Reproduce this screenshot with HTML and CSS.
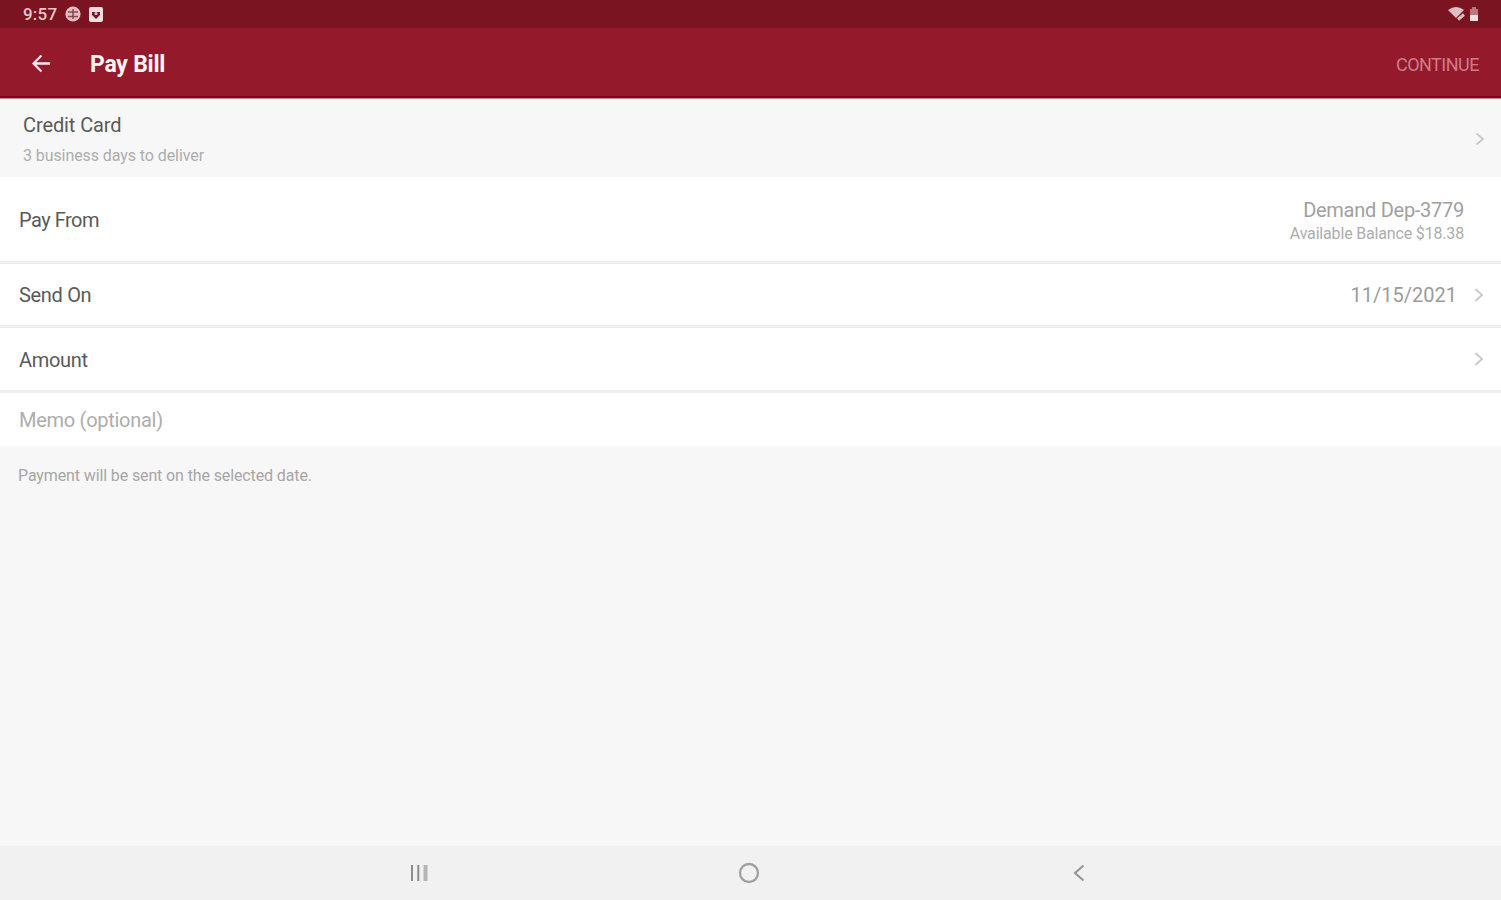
FILE: index.html
```html
<!DOCTYPE html>
<html lang="en">
<head>
<meta charset="utf-8">
<title>Pay Bill</title>
<link rel="stylesheet" href="styles.css">
</head>
<body>
<div class="status">
  <span class="time">9:57</span>
  <svg class="s-globe" width="16" height="16" viewBox="0 0 16 16"><circle cx="8" cy="8" r="7.600" fill="#e3bcc1"/><path d="M3 6h10M3 10.500h10M8 3v10" stroke="#8d4350" stroke-width="1.500"/></svg>
  <svg class="s-app" width="14" height="15" viewBox="0 0 14 15"><rect width="14" height="15" rx="2" fill="#f3dcde"/><path d="M3 5h8v3l-4 4-4-4z" fill="#701824"/><circle cx="7" cy="6.500" r="1.600" fill="#e4bfc4"/></svg>
  <svg class="s-wifi" width="20" height="16" viewBox="0 0 20 16"><path d="M1 4Q9 -2 17 4L13 8 9 12Z" fill="#dfbec1"/><path d="M9 14l9-7" stroke="#7a1420" stroke-width="2"/><path d="M11 13.500l6-5" stroke="#dfbec1" stroke-width="3"/></svg>
  <svg class="s-batt" width="10" height="15" viewBox="0 0 10 15"><path d="M3 0h4v2h2v6H1V2h2z" fill="#b77880"/><path d="M1 8h8v6H1z" fill="#f3dddd"/></svg>
</div>
<header class="bar">
  <svg class="back" width="20" height="20" viewBox="0 0 20 20"><path d="M19 9.500H3M10.500 1.500L2.500 9.500l8 8" fill="none" stroke="#fbe9eb" stroke-width="2.300"/></svg>
  <h1 class="title">Pay Bill</h1>
  <span class="continue">CONTINUE</span>
</header>
<main class="content">
  <section class="payee">
    <div class="payee-text"><div class="name">Credit Card</div><div class="deliver">3 business days to deliver</div></div>
    <svg class="chev" width="10" height="14" viewBox="0 0 10 14"><path d="M1.500 1.500L8 7l-6.500 5.500"/></svg>
  </section>
  <section class="row from">
    <span class="label pay-from">Pay From</span>
    <div class="account"><div class="acct-name">Demand Dep-3779</div><div class="balance">Available Balance $18.38</div></div>
  </section>
  <section class="row send"><span class="label send-on">Send On</span><span class="date">11/15/2021</span>
    <svg class="chev" width="10" height="14" viewBox="0 0 10 14"><path d="M1.500 1L8 7l-6.500 6"/></svg></section>
  <section class="row amount"><span class="label">Amount</span>
    <svg class="chev" width="10" height="14" viewBox="0 0 10 14"><path d="M1.500 1L8 7l-6.500 6"/></svg></section>
  <section class="memo">Memo (optional)</section>
  <p class="note">Payment will be sent on the selected date.</p>
</main>
<nav class="nav">
  <svg width="18" height="16" viewBox="0 0 18 16"><path d="M2 0v16M8.300 0v16" stroke="#8d8d8d" stroke-width="2"/><path d="M15.500 0v16" stroke="#b5b5b5" stroke-width="4"/></svg>
  <svg class="home" width="22" height="22" viewBox="0 0 22 22"><circle cx="11" cy="11" r="9" fill="none" stroke="#a0a0a0" stroke-width="2.300"/></svg>
  <svg width="12" height="18" viewBox="0 0 12 18"><path d="M10.500 1.500L2 9l8.500 7.500" fill="none" stroke="#939393" stroke-width="2"/></svg>
</nav>
</body>
</html>
```
FILE: styles.css
```css
* { box-sizing: border-box; }
body { margin: 0; height: 900px; display: flex; flex-direction: column; background: #f7f7f7; font-family: Roboto, "Liberation Sans", sans-serif; overflow: hidden; }
svg { display: block; flex: none; }
.status { height: 28px; background: #7a1420; display: flex; align-items: center; padding: 0 22px 0 23px; }
.time { font-size: 17px; font-weight: 500; color: #e9c6ca; width: 42px; letter-spacing: 0.2px; }
.s-app { margin-left: 8px; }
.s-wifi { margin-left: auto; }
.s-batt { margin-left: 2px; }
.bar { height: 71px; background: #93192b; border-bottom: 1px solid #c98a90; box-shadow: inset 0 -2px #850018; display: flex; align-items: center; padding: 2px 22px 0 31px; }
.title { margin: 0 0 0 39px; font-size: 23px; font-weight: 700; color: #fff3f4; letter-spacing: -0.25px; }
.continue { margin-left: auto; font-size: 18px; color: #d07c88; letter-spacing: -0.5px; }
.content { flex: 1; }
.payee { height: 78px; display: flex; align-items: center; justify-content: space-between; padding: 2px 16px 0 23px; }
.name, .label { font-size: 20px; line-height: 24px; color: #5a5a5a; }
.name { letter-spacing: -0.1px; }
.label { letter-spacing: -0.32px; padding-top: 1px; }
.pay-from { letter-spacing: -0.5px; }
.deliver { font-size: 16px; line-height: 20px; margin-top: 9px; color: #adadad; letter-spacing: -0.08px; }
.chev { fill: none; stroke: #c8c8c8; stroke-width: 1.8; }
.row { background: #fff; border-bottom: 3px solid #eee; display: flex; align-items: center; padding: 0 17px 0 19px; }
.label { margin-right: auto; }
.from { height: 87px; padding-right: 37px; }
.account { text-align: right; padding-top: 3px; }
.acct-name { font-size: 20px; line-height: 26px; color: #a0a0a0; letter-spacing: -0.27px; }
.balance { font-size: 16px; line-height: 22px; color: #adadad; letter-spacing: -0.17px; }
.send { height: 64px; }
.date { font-size: 20px; color: #9c9c9c; margin-right: 17px; padding-top: 1px; }
.amount { height: 65px; }
.memo { height: 53px; background: #fff; padding: 0 19px; font-size: 20px; line-height: 54px; color: #adadad; letter-spacing: -0.28px; }
.note { margin: 0; padding: 20px 18px; font-size: 16px; line-height: 20px; color: #a6a6a6; letter-spacing: -0.12px; }
.nav { height: 54px; background: #f1f1f1; display: flex; align-items: center; justify-content: space-between; padding: 0 416px 0 410px; }
.home { margin-right: 3px; }
```
